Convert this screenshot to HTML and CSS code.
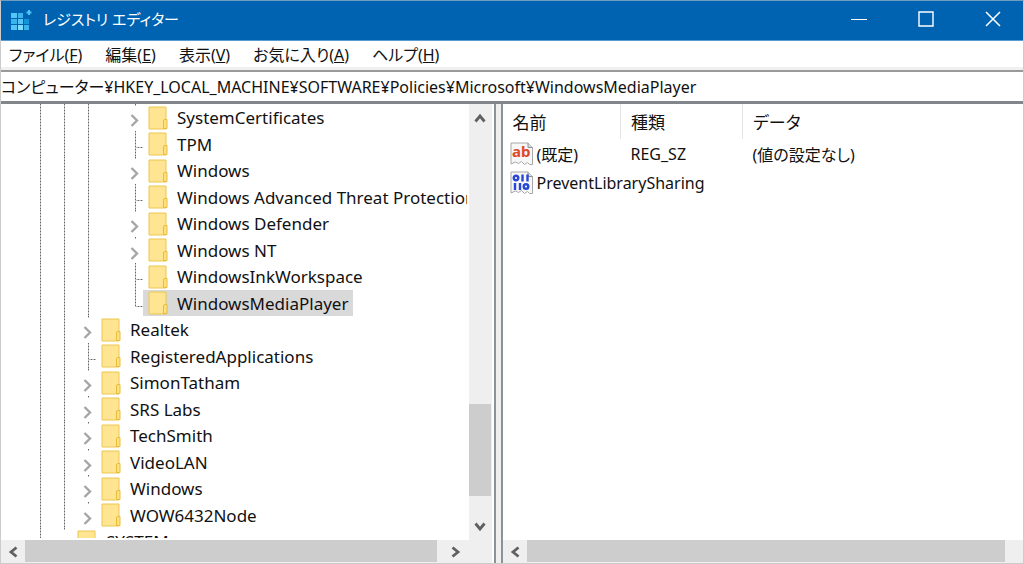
FILE: index.html
```
<!DOCTYPE html>
<html lang="ja">
<head>
  <meta charset="UTF-8">
  <meta name="viewport" content="width=device-width, initial-scale=1.0">
  <title>レジストリ エディター</title>
  <link rel="stylesheet" href="styles.css">
</head>
<body>

<svg class="sprite" aria-hidden="true">
  <symbol id="folder" viewBox="0 0 20 24">
    <path d="M1 1h17v22H1z" fill="#ffe591" stroke="#ecc64e"/>
    <path d="M15.500 22.500v-7.500q0-1.500 1.500-1.500h2v9z" fill="#ffe080" stroke="#e9bd3c"/>
  </symbol>
  <symbol id="expand" viewBox="0 0 9 13">
    <path d="M1.500 1l5.500 5.500L1.500 12" fill="none" stroke="#a6a6a6" stroke-width="2.400"/>
  </symbol>
  <symbol id="arrow-left" viewBox="0 0 12 12">
    <path d="M9.500 1.500L4 6l5.500 4.500" fill="none" stroke="#606060" stroke-width="2.800"/>
  </symbol>
  <symbol id="arrow-right" viewBox="0 0 12 12">
    <path d="M2.500 1.500L8 6l-5.500 4.500" fill="none" stroke="#606060" stroke-width="2.800"/>
  </symbol>
  <symbol id="arrow-up" viewBox="0 0 12 12">
    <path d="M1.500 9.500L6 4l4.500 5.500" fill="none" stroke="#606060" stroke-width="2.800"/>
  </symbol>
  <symbol id="arrow-down" viewBox="0 0 12 12">
    <path d="M1.500 2.500L6 8l4.500-5.500" fill="none" stroke="#606060" stroke-width="2.800"/>
  </symbol>
</svg>

<div class="window">
  <header class="titlebar">
    <svg class="app-icon" width="22" height="22" viewBox="0 0 22 22" aria-hidden="true">
      <path d="M0 3h6v5H0zM7 9h5v5H7zM0 15h6v5H0z" fill="#55c5f7"/>
      <path d="M7 3h5v5H7zM0 9h6v5H0zM13 15h5v5h-5z" fill="#3bb4ee"/>
      <path d="M13 9h5v5h-5z" fill="#0f96d8"/>
      <path d="M7 15h5v5H7z" fill="#7ddcff"/>
      <path d="M18 0v5M15.500 2.500h5" stroke="#4cc6f5" stroke-width="2"/>
    </svg>
    <h1>レジストリ エディター</h1>
    <button class="caption" aria-label="最小化">
      <svg width="16" height="16" viewBox="0 0 16 16"><path d="M0 8.500h16" stroke="#fff"/></svg>
    </button>
    <button class="caption" aria-label="最大化">
      <svg width="16" height="16" viewBox="0 0 16 16"><path d="M1 1h14v14H1z" fill="none" stroke="#fff" stroke-width="1.400"/></svg>
    </button>
    <button class="caption close" aria-label="閉じる">
      <svg width="16" height="16" viewBox="0 0 16 16"><path d="M1 1l14 14M15 1L1 15" stroke="#fff" stroke-width="1.500"/></svg>
    </button>
  </header>

  <nav class="menubar">
    <button>ファイル(<u>F</u>)</button>
    <button>編集(<u>E</u>)</button>
    <button>表示(<u>V</u>)</button>
    <button>お気に入り(<u>A</u>)</button>
    <button>ヘルプ(<u>H</u>)</button>
  </nav>

  <input class="address" type="text" aria-label="アドレス" value="コンピューター¥HKEY_LOCAL_MACHINE¥SOFTWARE¥Policies¥Microsoft¥WindowsMediaPlayer">

  <main class="panes">
    <section class="pane tree-pane">
      <div class="pane-body">
        <ul class="tree">
          <li><i class="line"></i><i class="line"></i><i class="line"></i><i class="gap"></i><i class="node closed"><svg><use href="#expand"/></svg></i><span class="key"><svg><use href="#folder"/></svg>SystemCertificates</span></li>
          <li><i class="line"></i><i class="line"></i><i class="line"></i><i class="gap"></i><i class="node leaf"></i><span class="key"><svg><use href="#folder"/></svg>TPM</span></li>
          <li><i class="line"></i><i class="line"></i><i class="line"></i><i class="gap"></i><i class="node closed"><svg><use href="#expand"/></svg></i><span class="key"><svg><use href="#folder"/></svg>Windows</span></li>
          <li><i class="line"></i><i class="line"></i><i class="line"></i><i class="gap"></i><i class="node leaf"></i><span class="key"><svg><use href="#folder"/></svg>Windows Advanced Threat Protection</span></li>
          <li><i class="line"></i><i class="line"></i><i class="line"></i><i class="gap"></i><i class="node closed"><svg><use href="#expand"/></svg></i><span class="key"><svg><use href="#folder"/></svg>Windows Defender</span></li>
          <li><i class="line"></i><i class="line"></i><i class="line"></i><i class="gap"></i><i class="node closed"><svg><use href="#expand"/></svg></i><span class="key"><svg><use href="#folder"/></svg>Windows NT</span></li>
          <li><i class="line"></i><i class="line"></i><i class="line"></i><i class="gap"></i><i class="node leaf"></i><span class="key"><svg><use href="#folder"/></svg>WindowsInkWorkspace</span></li>
          <li><i class="line"></i><i class="line"></i><i class="line"></i><i class="gap"></i><i class="node leaf last"></i><span class="key selected"><svg><use href="#folder"/></svg>WindowsMediaPlayer</span></li>
          <li><i class="line"></i><i class="line"></i><i class="node closed"><svg><use href="#expand"/></svg></i><span class="key"><svg><use href="#folder"/></svg>Realtek</span></li>
          <li><i class="line"></i><i class="line"></i><i class="node leaf"></i><span class="key"><svg><use href="#folder"/></svg>RegisteredApplications</span></li>
          <li><i class="line"></i><i class="line"></i><i class="node closed"><svg><use href="#expand"/></svg></i><span class="key"><svg><use href="#folder"/></svg>SimonTatham</span></li>
          <li><i class="line"></i><i class="line"></i><i class="node closed"><svg><use href="#expand"/></svg></i><span class="key"><svg><use href="#folder"/></svg>SRS Labs</span></li>
          <li><i class="line"></i><i class="line"></i><i class="node closed"><svg><use href="#expand"/></svg></i><span class="key"><svg><use href="#folder"/></svg>TechSmith</span></li>
          <li><i class="line"></i><i class="line"></i><i class="node closed"><svg><use href="#expand"/></svg></i><span class="key"><svg><use href="#folder"/></svg>VideoLAN</span></li>
          <li><i class="line"></i><i class="line"></i><i class="node closed"><svg><use href="#expand"/></svg></i><span class="key"><svg><use href="#folder"/></svg>Windows</span></li>
          <li><i class="line"></i><i class="line"></i><i class="node closed"><svg><use href="#expand"/></svg></i><span class="key"><svg><use href="#folder"/></svg>WOW6432Node</span></li>
          <li><i class="line"></i><i class="node closed"></i><span class="key"><svg><use href="#folder"/></svg>SYSTEM</span></li>
        </ul>
        <div class="scroll vertical">
          <button aria-label="上へ"><svg><use href="#arrow-up"/></svg></button>
          <div class="track"><div class="before"></div><div class="thumb"></div><div class="after"></div></div>
          <button aria-label="下へ"><svg><use href="#arrow-down"/></svg></button>
        </div>
      </div>
      <div class="scroll horizontal">
        <button aria-label="左へ"><svg><use href="#arrow-left"/></svg></button>
        <div class="track"><div class="thumb"></div><div class="after"></div></div>
        <button aria-label="右へ"><svg><use href="#arrow-right"/></svg></button>
        <div class="corner"></div>
      </div>
    </section>

    <div class="splitter"></div>

    <section class="pane value-pane">
      <div class="pane-body">
        <table class="values">
          <thead>
            <tr><th class="name">名前</th><th class="type">種類</th><th>データ</th></tr>
          </thead>
          <tbody>
            <tr>
              <td><div class="value">
                <svg width="24" height="24" viewBox="0 0 24 24" aria-hidden="true">
                  <path d="M1 1h17l4.500 4.500v17h-3l-2-2-3 2-3-3-3 2-3-1.500-4.500 2z" fill="#f7f7f7" stroke="#a8a8a8"/>
                  <path d="M18 1v4.500h4.500" fill="#ddd" stroke="#8f8f8f"/>
                  <text class="glyph-ab" x="2" y="15">ab</text>
                </svg>(既定)</div></td>
              <td>REG_SZ</td>
              <td>(値の設定なし)</td>
            </tr>
            <tr>
              <td><div class="value">
                <svg width="24" height="24" viewBox="0 0 24 24" aria-hidden="true">
                  <path d="M1 1h17l4.500 4.500v17h-3l-2-2-3 2-3-3-3 2-3-1.500-4.500 2z" fill="#f7f7f7" stroke="#a8a8a8"/>
                  <path d="M18 1v4.500h4.500" fill="#ddd" stroke="#8f8f8f"/>
                  <g fill="none" stroke="#2747d8" stroke-width="2.400">
                    <circle cx="6" cy="7" r="2.300"/>
                    <path d="M12.500 3.500v7M17.500 3.500v7M5 12v7M10 12v7"/>
                    <circle cx="16" cy="15.500" r="2.300"/>
                  </g>
                </svg>PreventLibrarySharing</div></td>
              <td></td>
              <td></td>
            </tr>
          </tbody>
        </table>
      </div>
      <div class="scroll horizontal">
        <button aria-label="左へ"><svg><use href="#arrow-left"/></svg></button>
        <div class="track"><div class="thumb"></div></div>
        <div class="corner"></div>
      </div>
    </section>
  </main>
</div>

</body>
</html>
```
FILE: styles.css
```
* {
  box-sizing: border-box;
}

body {
  margin: 0;
  font-family: "Noto Sans", "Noto Sans CJK JP", sans-serif;
  font-size: 16px;
  font-feature-settings: "palt" 1;
  color: #111;
  background: #fff;
}

button, input {
  font: inherit;
  font-feature-settings: inherit;
  color: inherit;
  border: none;
  padding: 0;
  background: none;
}

.sprite {
  display: none;
}

.window {
  display: flex;
  flex-direction: column;
  height: 100vh;
  border: 1px solid #ccc;
  border-top: 1px solid #6f9dc0;
  overflow: hidden;
}

/* title bar */
.titlebar {
  display: flex;
  align-items: center;
  flex: none;
  height: 40px;
  padding-left: 10px;
  color: #fff;
  background: #0063b1;
  border-bottom: 1px solid #5a9bd0;
}

.titlebar h1 {
  flex: 1;
  margin: 0 0 4px 10px;
  font-size: 15px;
  font-weight: normal;
}

.caption {
  display: flex;
  align-items: center;
  justify-content: center;
  width: 67px;
  height: 40px;
  padding-bottom: 3px;
}

.close {
  width: 60px;
  margin-left: 4px;
}

/* menu and address */
.menubar {
  display: flex;
  flex: none;
  gap: 23px;
  height: 31px;
  padding: 0 8px;
  border-bottom: 2px solid #999;
  box-shadow: inset 0 -3px #f0f0f0;
}

.menubar button {
  height: 26px;
  white-space: nowrap;
}

.address {
  flex: none;
  width: 100%;
  height: 29px;
  padding-bottom: 1px;
  outline: none;
}

/* panes */
.panes {
  display: flex;
  flex: 1;
  min-height: 0;
  border-top: 3px solid #82868a;
}

.pane {
  display: flex;
  flex-direction: column;
  min-width: 0;
}

.tree-pane {
  flex: 491;
  padding-right: 2px;
}

.value-pane {
  flex: 521;
}

.splitter {
  flex: none;
  width: 9px;
  background: #efefef;
  border: solid #8b9299;
  border-width: 0 2px;
}

.pane-body {
  display: flex;
  flex: 1;
  min-height: 0;
  overflow: hidden;
}

/* key tree */
.tree {
  flex: 1;
  min-width: 0;
  margin: 0 2px 2px 0;
  padding: 0 0 0 27px;
  font-size: 17px;
  list-style: none;
  overflow: hidden;
}

.tree li {
  display: flex;
  height: 27px;
  white-space: nowrap;
}

.tree li:nth-child(even) {
  height: 26px;
}

.line, .node {
  flex: none;
  width: 24px;
  background: repeating-linear-gradient(#666 0 1px, #bbb 1px 3px) 12px 0 / 1px 100% no-repeat;
}

.gap {
  flex: none;
  width: 23px;
}

.node {
  width: 20px;
}

.node.closed {
  padding: 10px 0 0 7px;
  background-size: 1px 2px;
}

.node.closed svg {
  display: block;
  width: 9px;
  height: 13px;
}

.node.leaf {
  background:
    repeating-linear-gradient(#666 0 1px, #bbb 1px 3px) 12px 0 / 1px 100% no-repeat,
    repeating-linear-gradient(90deg, #666 0 1px, #bbb 1px 3px) 12px 16px / 8px 1px no-repeat;
}

.node.last {
  background-size: 1px 17px, 8px 1px;
}

.key {
  display: flex;
  align-items: center;
  gap: 9px;
  padding: 0 5px;
}

.key svg {
  flex: none;
  width: 20px;
  height: 24px;
}

.selected {
  background: #d9d9d9;
}

/* scroll bars */
.scroll {
  display: flex;
  flex: none;
  background: #efefef;
}

.scroll button {
  display: flex;
  align-items: center;
  justify-content: center;
  flex: none;
  width: 24px;
  height: 23px;
}

.scroll svg {
  width: 12px;
  height: 12px;
}

.track {
  display: flex;
  flex: 1;
}

.thumb {
  background: #cdcdcd;
}

.vertical, .vertical .track {
  flex-direction: column;
}

.vertical {
  width: 23px;
}

.vertical button {
  width: 23px;
  height: 27px;
}

.vertical .before {
  flex: 272;
}

.vertical .thumb {
  flex: 92;
  margin-right: 1px;
}

.vertical .after {
  flex: 17;
}

.horizontal {
  height: 23px;
}

.horizontal .thumb {
  flex: 411;
  margin-bottom: 1px;
}

.horizontal .after {
  flex: 7;
}

.corner {
  width: 24px;
}

.value-pane .corner {
  width: 18px;
}

/* value list */
.values {
  width: 100%;
  align-self: flex-start;
  table-layout: fixed;
  border-collapse: collapse;
  text-align: left;
}

.values th {
  height: 35px;
  padding: 0 0 0 10px;
  font-size: 17px;
  font-weight: normal;
  border-right: 1px solid #e3e3e3;
}

.values th:last-child {
  border-right: none;
}

.values .name {
  width: 118px;
}

.values .type {
  width: 122px;
}

.values td {
  height: 29px;
  padding: 0 0 0 10px;
  white-space: nowrap;
}

.values td:first-child {
  padding-left: 7px;
}

.value {
  display: flex;
  align-items: center;
  gap: 3px;
}

.value svg {
  flex: none;
}

.glyph-ab {
  font-family: "Noto Sans", sans-serif;
  font-size: 15px;
  font-weight: bold;
  fill: #dc4a2c;
}
```
